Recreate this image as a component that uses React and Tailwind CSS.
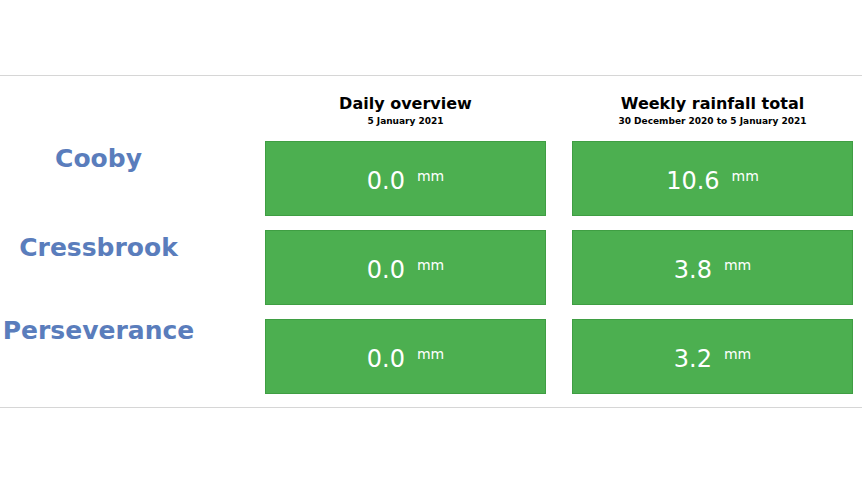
import React from "react";

const rows = [
  { name: "Cooby", daily: "0.0", weekly: "10.6", pt: "pt-[3px]" },
  { name: "Cressbrook", daily: "0.0", weekly: "3.8", pt: "pt-[3px]" },
  { name: "Perseverance", daily: "0.0", weekly: "3.2", pt: "-mt-[3px]" },
];

function Box({ value }) {
  return (
    <div className="w-[281px] h-[75px] bg-[#4caf50] border border-[#3f9e43] flex items-center justify-center text-white">
      <span className="text-[24px] leading-none mt-[4px]">{value}</span>
      <span className="text-[14px] leading-none ml-[12px] -mt-[6px]">mm</span>
    </div>
  );
}

export default function App() {
  return (
    <div
      className="w-[862px] h-[485px] bg-white overflow-hidden"
      style={{ fontFamily: '"DejaVu Sans", Verdana, sans-serif' }}
    >
      <div className="h-[75px]" />
      <div className="border-t border-b border-[#d6d6d6] h-[333px]">
        <div className="flex h-[65px] pl-[265px]">
          <div className="w-[281px] flex flex-col items-center pt-[18px]">
            <div className="text-[16px] font-bold text-black leading-[20px]">Daily overview</div>
            <div className="text-[9px] font-bold text-black leading-[12px] mt-[1px]">5 January 2021</div>
          </div>
          <div className="w-[26px]" />
          <div className="w-[281px] flex flex-col items-center pt-[18px]">
            <div className="text-[16px] font-bold text-black leading-[20px]">Weekly rainfall total</div>
            <div className="text-[9px] font-bold text-black leading-[12px] mt-[1px]">30 December 2020 to 5 January 2021</div>
          </div>
        </div>
        <div className="flex flex-col gap-[14px]">
          {rows.map((r) => (
            <div key={r.name} className="flex">
              <div className="w-[265px] flex">
                <div className={`w-[197px] text-center text-[25px] font-bold text-[#5a7dbc] leading-[30px] ${r.pt}`}>
                  {r.name}
                </div>
              </div>
              <Box value={r.daily} />
              <div className="w-[26px]" />
              <Box value={r.weekly} />
            </div>
          ))}
        </div>
      </div>
    </div>
  );
}
